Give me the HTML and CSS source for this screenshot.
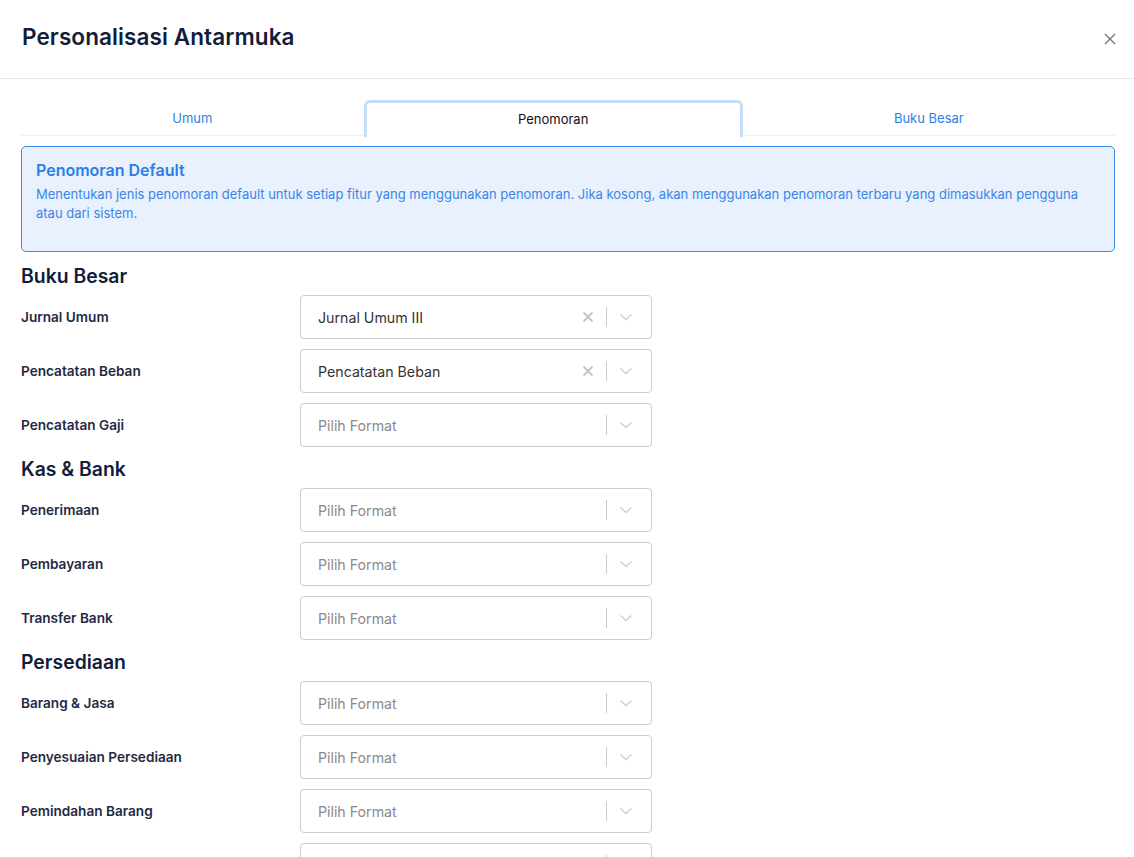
FILE: index.html
```html
<!DOCTYPE html>
<html lang="id">
<head>
    <meta charset="UTF-8">
    <meta name="viewport" content="width=device-width, initial-scale=1.0">
    <title>Personalisasi Antarmuka</title>
    <link rel="stylesheet" href="styles.css">
</head>
<body>
    <div class="modal">
        <div class="modal-header">
            <h1>Personalisasi Antarmuka</h1>
            <button class="close-btn" aria-label="Tutup">
                <svg width="12" height="12" viewBox="0 0 12 12"><path d="M1 1L11 11M11 1L1 11" stroke="#777" stroke-width="1.4"/></svg>
            </button>
        </div>

        <div class="modal-body">
            <div class="tabs">
                <div class="tab">Umum</div>
                <div class="tab active">Penomoran</div>
                <div class="tab">Buku Besar</div>
            </div>

            <div class="alert">
                <h3>Penomoran Default</h3>
                <p>Menentukan jenis penomoran default untuk setiap fitur yang menggunakan penomoran. Jika kosong, akan menggunakan penomoran terbaru yang dimasukkan pengguna atau dari sistem.</p>
            </div>

            <h2 class="section-title">Buku Besar</h2>
            <div class="field">
                <label>Jurnal Umum</label>
                <div class="select">
                    <span class="value">Jurnal Umum III</span>
                    <span class="clear"><svg width="12" height="12" viewBox="0 0 12 12"><path d="M1.5 1.5L10.5 10.5M10.5 1.5L1.5 10.5" stroke="#c4c4c4" stroke-width="1.8"/></svg></span>
                    <span class="sep"></span>
                    <span class="arrow"><svg width="14" height="8" viewBox="0 0 14 8"><path d="M1.5 1.5L7 6.5L12.5 1.5" fill="none" stroke="#cfcfcf" stroke-width="1.4"/></svg></span>
                </div>
            </div>
            <div class="field">
                <label>Pencatatan Beban</label>
                <div class="select">
                    <span class="value">Pencatatan Beban</span>
                    <span class="clear"><svg width="12" height="12" viewBox="0 0 12 12"><path d="M1.5 1.5L10.5 10.5M10.5 1.5L1.5 10.5" stroke="#c4c4c4" stroke-width="1.8"/></svg></span>
                    <span class="sep"></span>
                    <span class="arrow"><svg width="14" height="8" viewBox="0 0 14 8"><path d="M1.5 1.5L7 6.5L12.5 1.5" fill="none" stroke="#cfcfcf" stroke-width="1.4"/></svg></span>
                </div>
            </div>
            <div class="field">
                <label>Pencatatan Gaji</label>
                <div class="select">
                    <span class="placeholder">Pilih Format</span>
                    <span class="sep"></span>
                    <span class="arrow"><svg width="14" height="8" viewBox="0 0 14 8"><path d="M1.5 1.5L7 6.5L12.5 1.5" fill="none" stroke="#cfcfcf" stroke-width="1.4"/></svg></span>
                </div>
            </div>

            <h2 class="section-title">Kas &amp; Bank</h2>
            <div class="field">
                <label>Penerimaan</label>
                <div class="select">
                    <span class="placeholder">Pilih Format</span>
                    <span class="sep"></span>
                    <span class="arrow"><svg width="14" height="8" viewBox="0 0 14 8"><path d="M1.5 1.5L7 6.5L12.5 1.5" fill="none" stroke="#cfcfcf" stroke-width="1.4"/></svg></span>
                </div>
            </div>
            <div class="field">
                <label>Pembayaran</label>
                <div class="select">
                    <span class="placeholder">Pilih Format</span>
                    <span class="sep"></span>
                    <span class="arrow"><svg width="14" height="8" viewBox="0 0 14 8"><path d="M1.5 1.5L7 6.5L12.5 1.5" fill="none" stroke="#cfcfcf" stroke-width="1.4"/></svg></span>
                </div>
            </div>
            <div class="field">
                <label>Transfer Bank</label>
                <div class="select">
                    <span class="placeholder">Pilih Format</span>
                    <span class="sep"></span>
                    <span class="arrow"><svg width="14" height="8" viewBox="0 0 14 8"><path d="M1.5 1.5L7 6.5L12.5 1.5" fill="none" stroke="#cfcfcf" stroke-width="1.4"/></svg></span>
                </div>
            </div>

            <h2 class="section-title">Persediaan</h2>
            <div class="field">
                <label>Barang &amp; Jasa</label>
                <div class="select">
                    <span class="placeholder">Pilih Format</span>
                    <span class="sep"></span>
                    <span class="arrow"><svg width="14" height="8" viewBox="0 0 14 8"><path d="M1.5 1.5L7 6.5L12.5 1.5" fill="none" stroke="#cfcfcf" stroke-width="1.4"/></svg></span>
                </div>
            </div>
            <div class="field">
                <label>Penyesuaian Persediaan</label>
                <div class="select">
                    <span class="placeholder">Pilih Format</span>
                    <span class="sep"></span>
                    <span class="arrow"><svg width="14" height="8" viewBox="0 0 14 8"><path d="M1.5 1.5L7 6.5L12.5 1.5" fill="none" stroke="#cfcfcf" stroke-width="1.4"/></svg></span>
                </div>
            </div>
            <div class="field">
                <label>Pemindahan Barang</label>
                <div class="select">
                    <span class="placeholder">Pilih Format</span>
                    <span class="sep"></span>
                    <span class="arrow"><svg width="14" height="8" viewBox="0 0 14 8"><path d="M1.5 1.5L7 6.5L12.5 1.5" fill="none" stroke="#cfcfcf" stroke-width="1.4"/></svg></span>
                </div>
            </div>
            <div class="field">
                <label></label>
                <div class="select">
                    <span class="placeholder"></span>
                    <span class="sep"></span>
                    <span class="arrow"><svg width="14" height="8" viewBox="0 0 14 8"><path d="M1.5 1.5L7 6.5L12.5 1.5" fill="none" stroke="#cfcfcf" stroke-width="1.4"/></svg></span>
                </div>
            </div>
        </div>
    </div>
</body>
</html>
```

FILE: styles.css
```css
* {
    margin: 0;
    padding: 0;
    box-sizing: border-box;
}
html, body {
    height: 100%;
    overflow: hidden;
}
body {
    background: #fff;
    font-family: Inter, "Noto Sans", sans-serif;
    color: #16213e;
}
.modal-header {
    height: 79px;
    border-bottom: 1px solid #e8e8e8;
    display: flex;
    align-items: center;
    justify-content: space-between;
    padding: 0 18px 0 22px;
}
.modal-header h1 {
    font-size: 22.5px;
    font-weight: 600;
    color: #121d3c;
    letter-spacing: 0.1px;
    margin-top: -6px;
}
.close-btn {
    background: none;
    border: none;
    width: 12px;
    height: 12px;
    display: flex;
}
.modal-body {
    padding: 21px 19px 0 21px;
}

/* tabs */
.tabs {
    display: flex;
    border-bottom: 1px solid #eceef1;
    height: 36px;
}
.tab {
    flex: 1 1 auto;
    text-align: center;
    font-size: 13px;
    line-height: 36px;
    color: #2d7fe6;
}
.tab.active {
    color: #111;
    background: #fff;
    border: 3px solid #c6ddf9;
    border-bottom: none;
    border-radius: 6px 6px 0 0;
    line-height: 33px;
    height: 37px;
}

/* alert */
.alert {
    margin-top: 10px;
    background: #e8f1fd;
    border: 1px solid #3b8ceb;
    border-radius: 5px;
    padding: 12px 14px 28px;
}
.alert h3 {
    font-size: 16px;
    font-weight: 600;
    color: #2a7ee5;
    line-height: 22px;
}
.alert p {
    margin-top: 4px;
    font-size: 13px;
    line-height: 19px;
    color: #3a86e8;
}

/* sections */
.section-title {
    font-size: 19.4px;
    font-weight: 600;
    line-height: 24px;
    color: #121d3c;
    margin: 0 0 7px;
}
.alert + .section-title {
    margin-top: 12px;
}
.field {
    display: grid;
    grid-template-columns: 279px 352px;
    align-items: center;
    margin-bottom: 10px;
}
.field label {
    font-size: 13.6px;
    font-weight: 600;
    color: #1f2a44;
}
.select {
    height: 44px;
    border: 1px solid #cccccc;
    border-radius: 4px;
    display: flex;
    align-items: center;
    padding-left: 17px;
    font-size: 14.2px;
}
.value {
    flex: 1;
    color: #333;
}
.placeholder {
    flex: 1;
    color: #8a8a8a;
}
.clear {
    display: flex;
    margin-right: 12px;
}
.sep {
    width: 1px;
    height: 20px;
    background: #cccccc;
}
.arrow {
    display: flex;
    width: 38px;
    justify-content: center;
    margin-right: 6px;
}
```
